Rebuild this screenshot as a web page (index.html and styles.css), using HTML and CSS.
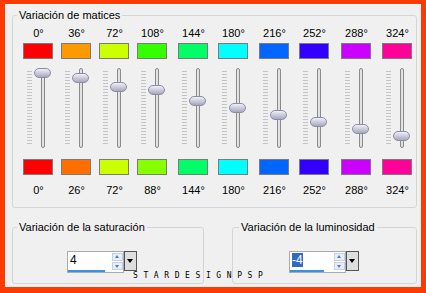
FILE: index.html
```html
<!DOCTYPE html>
<html lang="es">
<head>
    <meta charset="UTF-8">
    <title>Variación de matices</title>
    <link rel="stylesheet" href="styles.css">
</head>
<body>
<div class="frame">
    <!-- Hue rows -->
    <fieldset class="group group-hue">
        <legend>Variación de matices</legend>
        <div class="hues">
            <div class="hue">
                <div class="deg">0°</div>
                <div class="swatch" style="background:#ff0000"></div>
                <div class="slider"><span class="ticks"></span><span class="track"></span><span class="thumb" style="top:0px"></span></div>
                <div class="swatch" style="background:#ff0000"></div>
                <div class="deg">0°</div>
            </div>
            <div class="hue">
                <div class="deg">36°</div>
                <div class="swatch" style="background:#ff9900"></div>
                <div class="slider"><span class="ticks"></span><span class="track"></span><span class="thumb" style="top:5px"></span></div>
                <div class="swatch" style="background:#ff6e00"></div>
                <div class="deg">26°</div>
            </div>
            <div class="hue">
                <div class="deg">72°</div>
                <div class="swatch" style="background:#ccff00"></div>
                <div class="slider"><span class="ticks"></span><span class="track"></span><span class="thumb" style="top:14px"></span></div>
                <div class="swatch" style="background:#ccff00"></div>
                <div class="deg">72°</div>
            </div>
            <div class="hue">
                <div class="deg">108°</div>
                <div class="swatch" style="background:#33ff00"></div>
                <div class="slider"><span class="ticks"></span><span class="track"></span><span class="thumb" style="top:17px"></span></div>
                <div class="swatch" style="background:#88ff00"></div>
                <div class="deg">88°</div>
            </div>
            <div class="hue">
                <div class="deg">144°</div>
                <div class="swatch" style="background:#00ff66"></div>
                <div class="slider"><span class="ticks"></span><span class="track"></span><span class="thumb" style="top:28px"></span></div>
                <div class="swatch" style="background:#00ff66"></div>
                <div class="deg">144°</div>
            </div>
            <div class="hue">
                <div class="deg">180°</div>
                <div class="swatch" style="background:#00ffff"></div>
                <div class="slider"><span class="ticks"></span><span class="track"></span><span class="thumb" style="top:35px"></span></div>
                <div class="swatch" style="background:#00ffff"></div>
                <div class="deg">180°</div>
            </div>
            <div class="hue">
                <div class="deg">216°</div>
                <div class="swatch" style="background:#0066ff"></div>
                <div class="slider"><span class="ticks"></span><span class="track"></span><span class="thumb" style="top:42px"></span></div>
                <div class="swatch" style="background:#0066ff"></div>
                <div class="deg">216°</div>
            </div>
            <div class="hue">
                <div class="deg">252°</div>
                <div class="swatch" style="background:#3300ff"></div>
                <div class="slider"><span class="ticks"></span><span class="track"></span><span class="thumb" style="top:49px"></span></div>
                <div class="swatch" style="background:#3300ff"></div>
                <div class="deg">252°</div>
            </div>
            <div class="hue">
                <div class="deg">288°</div>
                <div class="swatch" style="background:#cc00ff"></div>
                <div class="slider"><span class="ticks"></span><span class="track"></span><span class="thumb" style="top:56px"></span></div>
                <div class="swatch" style="background:#cc00ff"></div>
                <div class="deg">288°</div>
            </div>
            <div class="hue">
                <div class="deg">324°</div>
                <div class="swatch" style="background:#ff0099"></div>
                <div class="slider"><span class="ticks"></span><span class="track"></span><span class="thumb" style="top:63px"></span></div>
                <div class="swatch" style="background:#ff0099"></div>
                <div class="deg">324°</div>
            </div>
        </div>
    </fieldset>

    <!-- Saturation / luminosity -->
    <div class="bottom">
        <fieldset class="group group-sat">
            <legend>Variación de la saturación</legend>
            <div class="field-row">
                <div class="spin">
                    <div class="spin-box">
                        <div class="spin-row">
                            <span class="spin-value">4</span>
                            <span class="spin-btns"><span class="btn up"></span><span class="btn down"></span></span>
                        </div>
                        <div class="spin-bar" style="width:37px"></div>
                    </div>
                    <span class="drop"></span>
                </div>
            </div>
        </fieldset>
        <fieldset class="group group-lum">
            <legend>Variación de la luminosidad</legend>
            <div class="field-row">
                <div class="spin">
                    <div class="spin-box">
                        <div class="spin-row">
                            <span class="spin-value"><span class="selected">-4</span></span>
                            <span class="spin-btns"><span class="btn up"></span><span class="btn down"></span></span>
                        </div>
                        <div class="spin-bar" style="width:34px"></div>
                    </div>
                    <span class="drop"></span>
                </div>
            </div>
        </fieldset>
    </div>

    <div class="watermark">STARDESIGNPSP</div>
</div>
</body>
</html>
```

FILE: styles.css
```css
* {
    box-sizing: border-box;
    margin: 0;
    padding: 0;
}

body {
    width: 426px;
    height: 293px;
    overflow: hidden;
    font-family: "Liberation Sans", Arial, sans-serif;
    font-size: 11px;
    color: #000;
}

.frame {
    position: relative;
    width: 426px;
    height: 293px;
    background-color: #f0f0f0;
    border: solid #ff3a00;
    border-width: 4px 5px 6px 5px;
    box-shadow: inset 1px 1px 0 #fff;
}

/* Group boxes */
.group {
    border: 1px solid #d3d5da;
    border-radius: 3px;
    padding: 0 4px;
    min-width: 0;
}

.group legend {
    padding: 0 2px;
    line-height: 13px;
}

.group-hue {
    margin: 5px 4px 0 7px;
    padding-bottom: 10px;
}

.hues {
    display: grid;
    grid-template-columns: 38px 38px 38px 41px 40px 41px 40px 42px 41px 30px;
    margin: 5px 0 0 6px;
}

.hue {
    display: flex;
    flex-direction: column;
    width: 30px;
}

.deg {
    line-height: 13px;
    text-align: center;
    margin-left: 1px;
    white-space: nowrap;
}

.swatch {
    height: 16px;
    margin-top: 3px;
    border: 1px solid #7b7b7b;
}

.hue .swatch + .deg {
    margin-top: 9px;
}

.slider {
    position: relative;
    height: 80px;
    margin: 9px 0 8px;
}

.ticks {
    position: absolute;
    left: 4px;
    top: 3px;
    width: 5px;
    height: 73px;
    background: repeating-linear-gradient(to bottom, #c4c4c4 0 1px, transparent 1px 3px);
}

.track {
    position: absolute;
    left: 18px;
    top: 0;
    width: 4px;
    height: 80px;
    border: 1px solid #8a8a8a;
    border-radius: 2px;
    background-color: #e2e2e2;
}

.thumb {
    position: absolute;
    left: 11px;
    width: 17px;
    height: 10px;
    border: 1px solid #8c8ca4;
    border-radius: 5px;
    background: linear-gradient(to bottom, #f0f0f6, #c4c4d6 60%, #a8a8be);
}

/* Bottom row */
.bottom {
    display: flex;
    margin-top: 13px;
}

.group-sat {
    width: 192px;
    margin-left: 7px;
}

.group-lum {
    width: 185px;
    margin-left: 28px;
    padding-left: 6px;
}

.field-row {
    padding: 17px 0 10px 50px;
}

.spin {
    display: flex;
    align-items: flex-start;
}

.spin-box {
    width: 57px;
    height: 22px;
    border: 1px solid #a9a9b0;
    background-color: #fff;
    display: flex;
    flex-direction: column;
}

.spin-row {
    flex: 1;
    display: flex;
}

.spin-value {
    flex: 1;
    padding: 1px 0 0 2px;
    font-size: 12px;
    line-height: 15px;
}

.selected {
    background-color: #316ac5;
    color: #fff;
}

.spin-btns {
    width: 11px;
    display: flex;
    flex-direction: column;
    gap: 1px;
    padding-top: 1px;
}

.btn {
    position: relative;
    height: 8px;
    border: 1px solid #c3d0e8;
    background-color: #e8eefa;
}

.btn::after {
    content: '';
    position: absolute;
    left: 2px;
    border-left: 2.5px solid transparent;
    border-right: 2.5px solid transparent;
}

.up::after {
    top: 1px;
    border-bottom: 3px solid #5a78b4;
}

.down::after {
    top: 2px;
    border-top: 3px solid #5a78b4;
}

.spin-bar {
    height: 3px;
    background-color: #3d8fe0;
}

.drop {
    position: relative;
    width: 13px;
    height: 20px;
    border: 1px solid #555;
    background-color: #dedede;
}

.drop::after {
    content: '';
    position: absolute;
    left: 2px;
    top: 7px;
    border-left: 3.5px solid transparent;
    border-right: 3.5px solid transparent;
    border-top: 4px solid #000;
}

.watermark {
    position: absolute;
    left: 128px;
    top: 267px;
    font-family: "DejaVu Sans Mono", monospace;
    font-size: 8px;
    letter-spacing: 5.6px;
    line-height: 9px;
}
```
